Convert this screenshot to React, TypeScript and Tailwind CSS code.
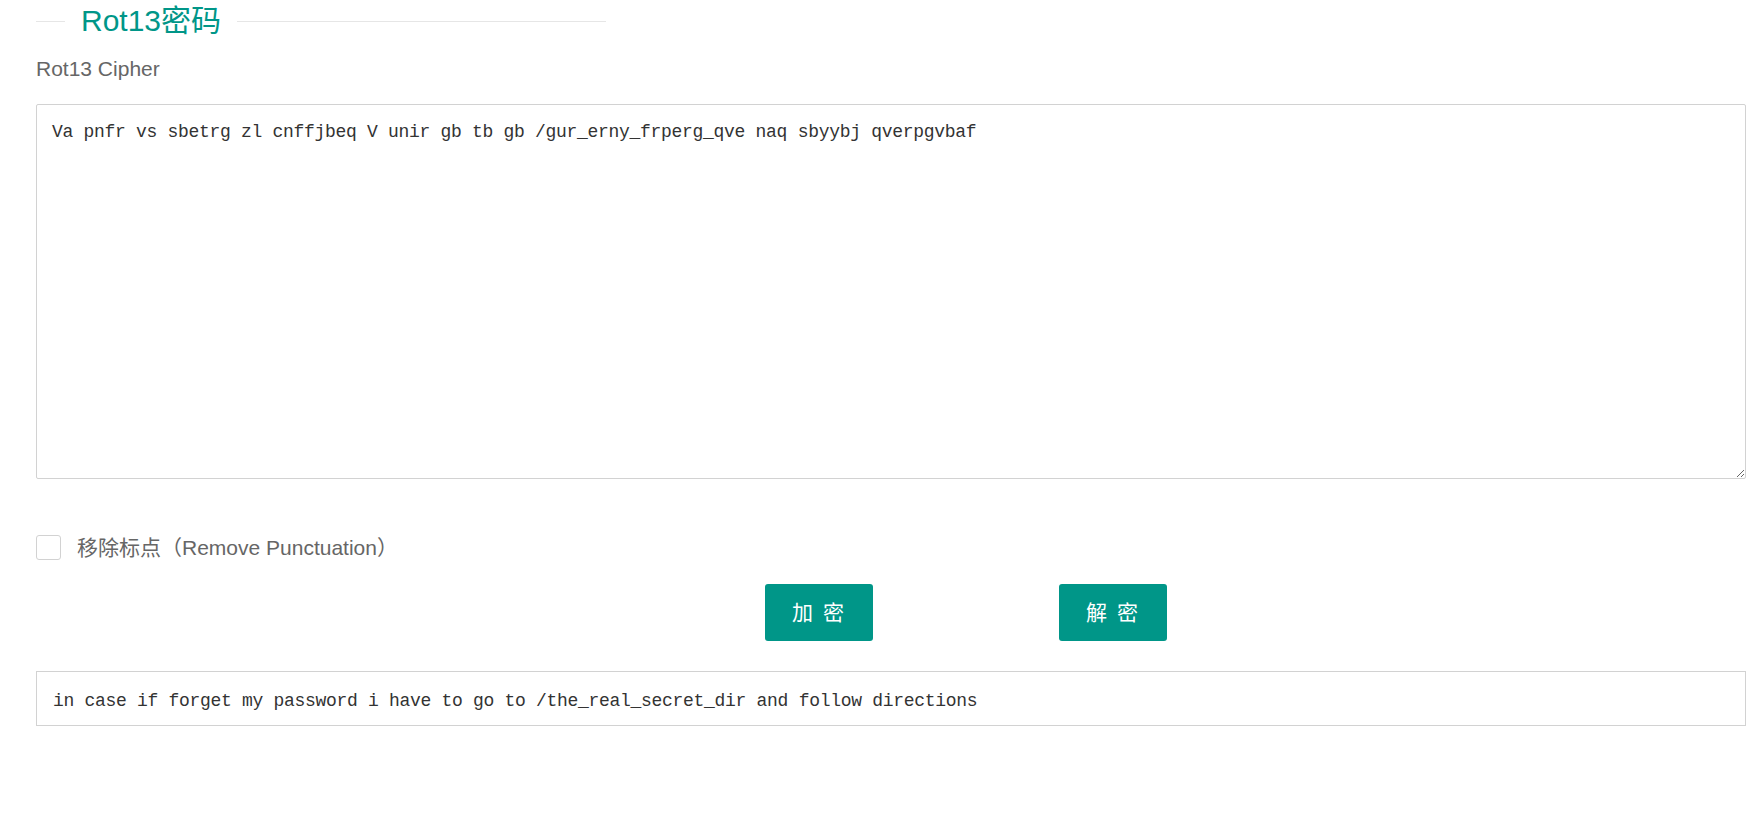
import { useState } from "react";

const INPUT_TEXT =
  "Va pnfr vs sbetrg zl cnffjbeq V unir gb tb gb /gur_erny_frperg_qve naq sbyybj qverpgvbaf";
const OUTPUT_TEXT =
  "in case if forget my password i have to go to /the_real_secret_dir and follow directions";

// plain rot13, used by both buttons
function rot13(s: string, stripPunct: boolean) {
  let out = s.replace(/[a-zA-Z]/g, (c) => {
    const base = c <= "Z" ? 65 : 97;
    return String.fromCharCode(((c.charCodeAt(0) - base + 13) % 26) + base);
  });
  if (stripPunct) out = out.replace(/[^\w\s]/g, "");
  return out;
}

export default function App() {
  const [text, setText] = useState(INPUT_TEXT);
  const [removePunct, setRemovePunct] = useState(false);
  const [result, setResult] = useState(OUTPUT_TEXT);

  return (
    <div
      className="min-h-screen bg-white pl-[36px] pr-[8px]"
      style={{ fontFamily: '"Liberation Sans", "Noto Sans CJK SC", sans-serif' }}
    >
      {/* fieldset-style title */}
      <div className="flex h-[42px] w-[570px] items-center">
        <div className="h-px w-[29px] bg-[#e6e6e6]" />
        <span className="px-[16px] text-[30px] leading-none text-[#009688]">Rot13密码</span>
        <div className="h-px flex-1 bg-[#e6e6e6]" />
      </div>

      <div className="mt-[11px] h-[32px] text-[21px] leading-[32px] text-[#666]">Rot13 Cipher</div>

      <textarea
        value={text}
        onChange={(e) => setText(e.target.value)}
        className="mt-[19px] box-border block h-[375px] w-full resize-y rounded-[2px] border border-[#d2d2d2] px-[15px] pt-[14px] text-[18px] leading-[26px] tracking-[-0.3px] text-[#333] outline-none"
        style={{ fontFamily: '"Liberation Mono", "DejaVu Sans Mono", monospace' }}
      />

      <label className="mt-[56px] flex h-[25px] cursor-pointer items-center">
        <span
          className={
            "box-border h-[25px] w-[25px] rounded-[3px] border " +
            (removePunct ? "border-[#009688] bg-[#009688]" : "border-[#d2d2d2] bg-white")
          }
        />
        <input
          type="checkbox"
          className="hidden"
          checked={removePunct}
          onChange={(e) => setRemovePunct(e.target.checked)}
        />
        <span className="ml-[16px] text-[21px] leading-none text-[#666]">移除标点（Remove Punctuation）</span>
      </label>

      <div className="mt-[24px] flex gap-[186px] pl-[729px]">
        <button
          onClick={() => setResult(rot13(text, removePunct))}
          className="h-[57px] w-[108px] rounded-[3px] bg-[#009688] text-[21px] tracking-[2px] text-white"
        >
          加 密
        </button>
        <button
          onClick={() => setResult(rot13(text, removePunct))}
          className="h-[57px] w-[108px] rounded-[3px] bg-[#009688] text-[21px] tracking-[2px] text-white"
        >
          解 密
        </button>
      </div>

      <div
        className="mt-[30px] box-border h-[55px] w-full border border-[#d2d2d2] px-[16px] pt-[17px] text-[18px] leading-[24px] tracking-[-0.3px] text-[#333]"
        style={{ fontFamily: '"Liberation Mono", "DejaVu Sans Mono", monospace' }}
      >
        {result}
      </div>
    </div>
  );
}
